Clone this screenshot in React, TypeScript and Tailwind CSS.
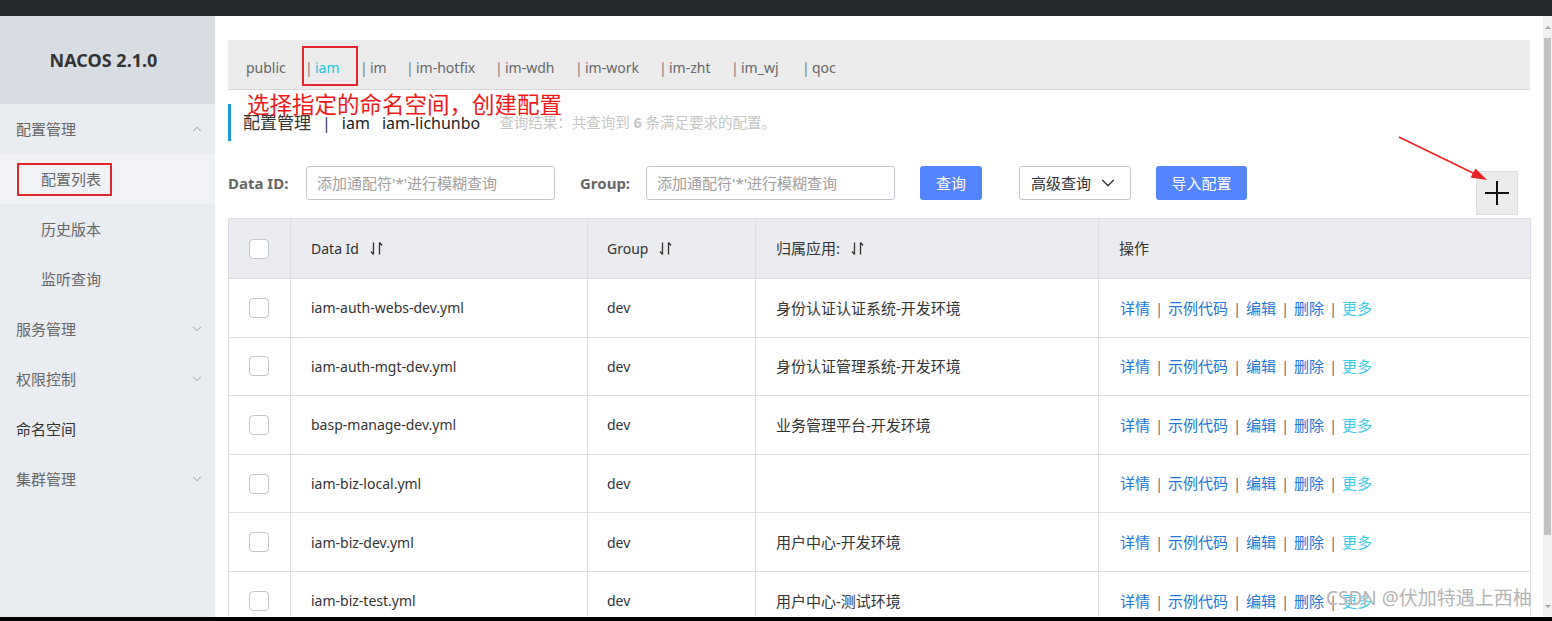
import { ChevronDown, ChevronUp } from "lucide-react";

const tabs = [
  { name: "iam", w: "w-[56px]", active: true },
  { name: "im", w: "w-[46px]" },
  { name: "im-hotfix", w: "w-[89px]" },
  { name: "im-wdh", w: "w-[80px]" },
  { name: "im-work", w: "w-[84px]" },
  { name: "im-zht", w: "w-[72px]" },
  { name: "im_wj", w: "w-[71px]" },
  { name: "qoc", w: "w-[60px]" },
];

const rows = [
  { id: "iam-auth-webs-dev.yml", group: "dev", app: "身份认证认证系统-开发环境" },
  { id: "iam-auth-mgt-dev.yml", group: "dev", app: "身份认证管理系统-开发环境" },
  { id: "basp-manage-dev.yml", group: "dev", app: "业务管理平台-开发环境" },
  { id: "iam-biz-local.yml", group: "dev", app: "" },
  { id: "iam-biz-dev.yml", group: "dev", app: "用户中心-开发环境" },
  { id: "iam-biz-test.yml", group: "dev", app: "用户中心-测试环境" },
];

const menu = [
  { label: "服务管理", chevron: true },
  { label: "权限控制", chevron: true },
  { label: "命名空间", chevron: false, dark: true },
  { label: "集群管理", chevron: true },
];

function SortIcon() {
  return (
    <svg width="13" height="15" viewBox="0 0 13 15" className="ml-[11px] shrink-0" fill="none" stroke="#333" strokeWidth="1.3">
      <path d="M3.5 1.5v12M3.5 13.5L1 10.5" />
      <path d="M9.5 13.5v-12M9.5 1.5L12 4.5" />
    </svg>
  );
}

function Checkbox() {
  return <div className="w-[20px] h-[20px] rounded-[4px] border border-[#c4c6cf] bg-white" />;
}

function Sep() {
  return <span className="inline-block w-[18px] text-center text-[14px] text-[#666]">|</span>;
}

export default function App() {
  return (
    <div className="relative w-[1552px] h-[621px] overflow-hidden flex flex-col bg-white font-['Noto_Sans','Noto_Sans_CJK_SC',sans-serif] text-[#333]">
      <div className="h-[16px] shrink-0 bg-[#25292e]" />

      <div className="flex flex-1 min-h-0">
        {/* Sidebar */}
        <aside className="w-[215px] shrink-0 bg-[#e9ecf0]">
          <div className="h-[88px] bg-[#d8dde3] flex items-center justify-center pr-[8px]">
            <span className="text-[18px] font-bold text-[#333]">NACOS 2.1.0</span>
          </div>
          <div className="h-[50px] flex items-center justify-between pl-[16px] pr-[11px] text-[15px] text-[#666]">
            <span>配置管理</span>
            <ChevronUp size={14} strokeWidth={1.2} color="#777" />
          </div>
          <div className="h-[50px] bg-[#f0f2f5] flex items-center pl-[17px]">
            <span className="h-[33px] w-[95px] border-2 border-[#e3262d] flex items-center pl-[22px] text-[15px] text-[#666]">
              配置列表
            </span>
          </div>
          <div className="h-[50px] flex items-center pl-[41px] text-[15px] text-[#666]">历史版本</div>
          <div className="h-[50px] flex items-center pl-[41px] text-[15px] text-[#666]">监听查询</div>
          {menu.map((m) => (
            <div
              key={m.label}
              className={`h-[50px] flex items-center justify-between pl-[16px] pr-[11px] text-[15px] ${m.dark ? "text-[#333]" : "text-[#666]"}`}
            >
              <span>{m.label}</span>
              {m.chevron && <ChevronDown size={14} strokeWidth={1.2} color="#777" />}
            </div>
          ))}
        </aside>

        {/* Main */}
        <main className="relative flex-1 min-w-0 px-[13px] overflow-hidden">
          {/* Namespace tabs */}
          <div className="mt-[24px] h-[50px] bg-[#ececec] border-b border-[#d6d6d6] flex items-center pl-[18px] text-[14px] text-[#666]">
            <span className="w-[56px] pt-[6px]">public</span>
            {tabs.map((t) =>
              t.active ? (
                <span
                  key={t.name}
                  className={`${t.w} h-[40px] mr-[2px] mt-[2px] border-2 border-[#e3262d] flex items-center pl-[1px] pt-[4px]`}
                >
                  <span className="inline-block w-[10px] text-[#777]">|</span>
                  <span className="text-[#1ec4de]">{t.name}</span>
                </span>
              ) : (
                <span key={t.name} className={`${t.w} flex items-center pt-[6px]`}>
                  <span className="inline-block w-[10px] text-[#777]">|</span>
                  <span>{t.name}</span>
                </span>
              )
            )}
          </div>

          {/* Title */}
          <div className="mt-[14px] h-[37px] flex items-center border-l-[3px] border-[#1a9bd7] pl-[12px]">
            <span className="text-[17px] text-[#333]">配置管理</span>
            <span className="text-[16px] text-[#333] mx-[11px]">|</span>
            <span className="text-[16px] text-[#222]">iam</span>
            <span className="text-[16px] text-[#222] ml-[12px]">iam-lichunbo</span>
            <span className="text-[14.5px] text-[#c6c6c6] ml-[19px]">
              查询结果：共查询到 <b className="font-bold">6</b> 条满足要求的配置。
            </span>
          </div>

          {/* Search row */}
          <div className="mt-[25px] h-[34px] flex items-center">
            <span className="w-[78px] text-[15px] font-bold text-[#666]">Data ID:</span>
            <input
              readOnly
              placeholder="添加通配符'*'进行模糊查询"
              className="w-[249px] h-[34px] rounded-[3px] border border-[#c4c6cf] px-[10px] text-[15px] placeholder:text-[#a0a0a0] outline-none"
            />
            <span className="ml-[25px] w-[66px] text-[15px] font-bold text-[#666]">Group:</span>
            <input
              readOnly
              placeholder="添加通配符'*'进行模糊查询"
              className="w-[249px] h-[34px] rounded-[3px] border border-[#c4c6cf] px-[10px] text-[15px] placeholder:text-[#a0a0a0] outline-none"
            />
            <button className="ml-[25px] w-[62px] h-[34px] rounded-[3px] bg-[#5584ff] text-white text-[15px]">查询</button>
            <button className="ml-[37px] w-[112px] h-[34px] rounded-[3px] border border-[#c4c6cf] bg-white text-[15px] text-[#333] flex items-center justify-center gap-[6px]">
              高级查询
              <ChevronDown size={22} strokeWidth={1.4} color="#333" />
            </button>
            <button className="ml-[25px] w-[91px] h-[34px] rounded-[3px] bg-[#5584ff] text-white text-[15px]">导入配置</button>
            <div className="ml-auto mr-[12px] self-start mt-[5px] w-[42px] h-[44px] shrink-0 bg-[#ececec] border border-[#dddddd] flex items-center justify-center">
              <svg width="26" height="26" viewBox="0 0 26 26" stroke="#111" strokeWidth="2">
                <path d="M1 13h24M13 1v24" />
              </svg>
            </div>
          </div>

          {/* Table */}
          <table className="mt-[18px] w-[1302px] table-fixed border-collapse text-left">
            <colgroup>
              <col className="w-[62px]" />
              <col className="w-[297px]" />
              <col className="w-[168px]" />
              <col className="w-[343px]" />
              <col className="w-[432px]" />
            </colgroup>
            <thead>
              <tr className="h-[60px] bg-[#ebecf0]">
                <th className="border border-[#dcdee3] pl-[20px] font-normal"><Checkbox /></th>
                <th className="border border-[#dcdee3] pl-[20px] font-normal text-[14px]">
                  <div className="flex items-center">Data Id<SortIcon /></div>
                </th>
                <th className="border border-[#dcdee3] pl-[19px] font-normal text-[14px]">
                  <div className="flex items-center">Group<SortIcon /></div>
                </th>
                <th className="border border-[#dcdee3] pl-[20px] font-normal text-[15px]">
                  <div className="flex items-center">归属应用:<SortIcon /></div>
                </th>
                <th className="border border-[#dcdee3] pl-[20px] font-normal text-[15px]">操作</th>
              </tr>
            </thead>
            <tbody>
              {rows.map((r) => (
                <tr key={r.id} className="h-[58.6px]">
                  <td className="border border-[#dcdee3] pl-[20px]"><Checkbox /></td>
                  <td className="border border-[#dcdee3] pl-[20px] text-[14px] text-[#333]">{r.id}</td>
                  <td className="border border-[#dcdee3] pl-[19px] text-[14px] text-[#333]">{r.group}</td>
                  <td className="border border-[#dcdee3] pl-[20px] text-[15px] text-[#333]">{r.app}</td>
                  <td className="border border-[#dcdee3] pl-[21px] text-[15px]">
                    <span className="text-[#2277d9]">详情</span>
                    <Sep />
                    <span className="text-[#2277d9]">示例代码</span>
                    <Sep />
                    <span className="text-[#2277d9]">编辑</span>
                    <Sep />
                    <span className="text-[#2277d9]">删除</span>
                    <Sep />
                    <span className="text-[#3fcbe8]">更多</span>
                  </td>
                </tr>
              ))}
            </tbody>
          </table>

          {/* annotations */}
          <div className="absolute left-[32px] top-[78px] text-[22.5px] leading-none text-[#f01818] whitespace-nowrap">
            选择指定的命名空间，创建配置
          </div>
          <svg className="absolute left-[1180px] top-[115px]" width="100" height="60" viewBox="0 0 100 60">
            <path d="M4 6L80 43" stroke="#ee2222" strokeWidth="1.6" />
            <path d="M92 49L75.5 46.5L80.5 37.5Z" fill="#ee2222" />
          </svg>
        </main>

        {/* Scrollbar */}
        <div className="w-[9px] shrink-0 bg-[#f1f1f1] flex flex-col items-center">
          <div className="h-[22px] flex items-center justify-center">
            <div className="w-0 h-0 border-l-[3px] border-r-[3px] border-b-[3px] border-l-transparent border-r-transparent border-b-[#a3a3a3]" />
          </div>
          <div className="w-[7px] h-[497px] bg-[#c1c1c1]" />
          <div className="flex-1" />
          <div className="h-[22px] flex items-center justify-center">
            <div className="w-0 h-0 border-l-[3px] border-r-[3px] border-t-[3px] border-l-transparent border-r-transparent border-t-[#a3a3a3]" />
          </div>
        </div>
      </div>

      <div className="h-[4px] shrink-0 bg-black" />

      <div className="absolute left-[1326px] top-[589px] text-[19px] leading-none text-[#b4b4b4] whitespace-nowrap [text-shadow:0_0_1px_#ffffff]">
        CSDN @伏加特遇上西柚
      </div>
    </div>
  );
}
